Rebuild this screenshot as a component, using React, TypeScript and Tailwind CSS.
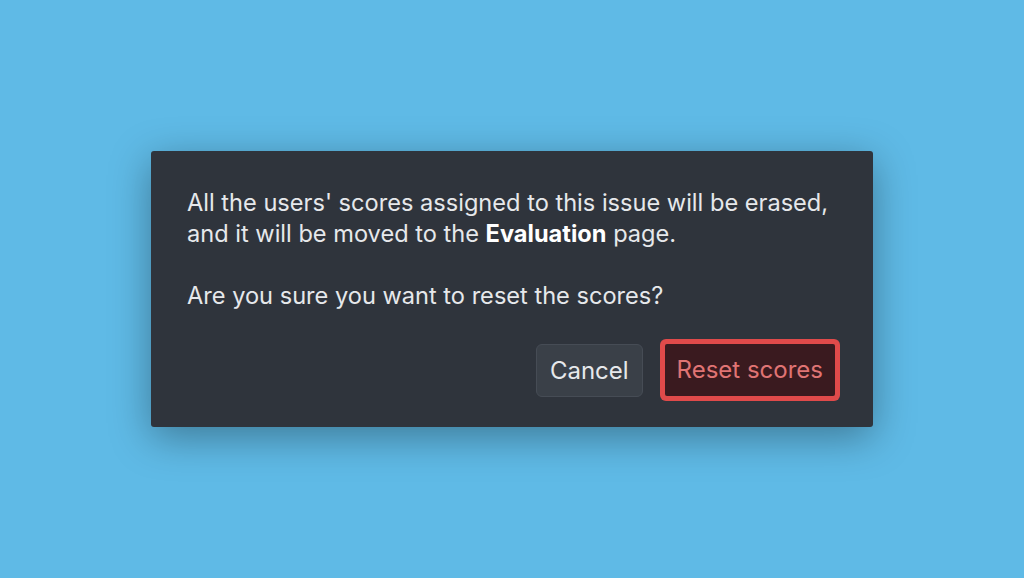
import React from 'react'

export default function App() {
  return (
    <div
      className="w-[1024px] h-[578px] bg-[#5fbae6] flex items-center justify-center"
      style={{ fontFamily: 'Inter, "Noto Sans", sans-serif' }}
    >
      {/* Confirm dialog */}
      <div className="w-[722px] h-[276px] bg-[#2f343c] rounded-[3px] shadow-[0_10px_40px_rgba(0,0,0,0.35)] pl-[36px] pr-[38px] pt-[36px] pb-[30px] flex flex-col">
        <div className="text-[23.6px] leading-[31px] text-[#e6e8eb]">
          <p>
            All the users' scores assigned to this issue will be erased,
            <br />
            and it will be moved to the <span className="font-bold text-white">Evaluation</span> page.
          </p>
          <p className="mt-[31px]">Are you sure you want to reset the scores?</p>
        </div>

        <div className="mt-auto flex justify-end items-center gap-[22px]">
          <button className="h-[53px] mt-[2px] px-[13px] rounded-[6px] bg-[#3a4048] border border-[#464c55] text-[24px] text-[#e6e8eb]">
            Cancel
          </button>
          <button className="h-[52px] px-[12px] rounded-[2px] bg-[#3a1a1f] ring-[5px] ring-[#e04a4a] text-[24px] text-[#e07474]">
            Reset scores
          </button>
        </div>
      </div>
    </div>
  )
}
